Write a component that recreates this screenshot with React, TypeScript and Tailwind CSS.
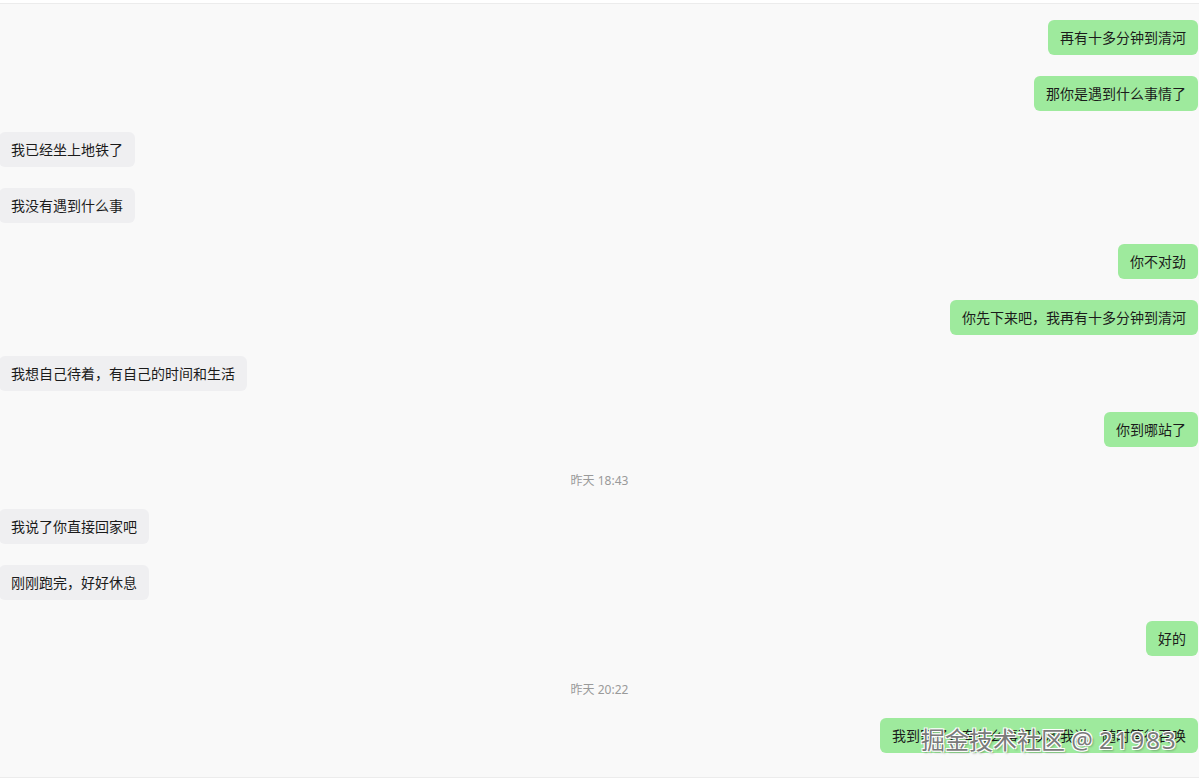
import React from "react";

type Item =
  | { kind: "me"; text: string }
  | { kind: "other"; text: string }
  | { kind: "time"; text: string };

const messages: Item[] = [
  { kind: "me", text: "再有十多分钟到清河" },
  { kind: "me", text: "那你是遇到什么事情了" },
  { kind: "other", text: "我已经坐上地铁了" },
  { kind: "other", text: "我没有遇到什么事" },
  { kind: "me", text: "你不对劲" },
  { kind: "me", text: "你先下来吧，我再有十多分钟到清河" },
  { kind: "other", text: "我想自己待着，有自己的时间和生活" },
  { kind: "me", text: "你到哪站了" },
  { kind: "time", text: "昨天 18:43" },
  { kind: "other", text: "我说了你直接回家吧" },
  { kind: "other", text: "刚刚跑完，好好休息" },
  { kind: "me", text: "好的" },
  { kind: "time", text: "昨天 20:22" },
  { kind: "me", text: "我到家了，有什么事可以和我说，随时等待召唤" },
];

const App = () => {
  return (
    <div
      className="relative w-[1199px] h-[780px] bg-white overflow-hidden"
      style={{ fontFamily: '"Noto Sans", "Noto Sans CJK SC", sans-serif' }}
    >
      <div className="mt-[3px] h-[775px] bg-[#f9f9f9] border-t border-b border-[#ececec] pt-[16px]">
        {messages.map((m, i) => {
          if (m.kind === "time") {
            return (
              <div
                key={i}
                className="mt-[24px] mb-[-3px] h-[20px] flex items-center justify-center text-[12px] text-[#9a9a9a]"
              >
                {m.text}
              </div>
            );
          }
          const first = i === 0;
          if (m.kind === "me") {
            return (
              <div
                key={i}
                className={`flex justify-end pr-[1px] ${first ? "" : "mt-[21px]"}`}
              >
                <div className="bg-[#9eea9d] rounded-md px-3 h-[35px] flex items-center text-[14px] text-[#1b1b1b] whitespace-nowrap">
                  {m.text}
                </div>
              </div>
            );
          }
          return (
            <div key={i} className="flex justify-start mt-[21px]">
              <div className="bg-[#efeff1] rounded-md ml-[-1px] px-3 h-[35px] flex items-center text-[14px] text-[#1b1b1b] whitespace-nowrap">
                {m.text}
              </div>
            </div>
          );
        })}
      </div>

      {/* watermark */}
      <div
        className="absolute left-[921px] top-[724px] text-[24px] leading-[32px] text-[#7b7b7b] whitespace-nowrap"
        style={{
          textShadow:
            "1px 1px 0 #fff, -1px -1px 0 #fff, 1px -1px 0 #fff, -1px 1px 0 #fff, 2px 2px 2px rgba(0,0,0,0.25)",
        }}
      >
        掘金技术社区 @ <span className="tracking-[2px]">21983</span>
      </div>
    </div>
  );
};

export default App;
